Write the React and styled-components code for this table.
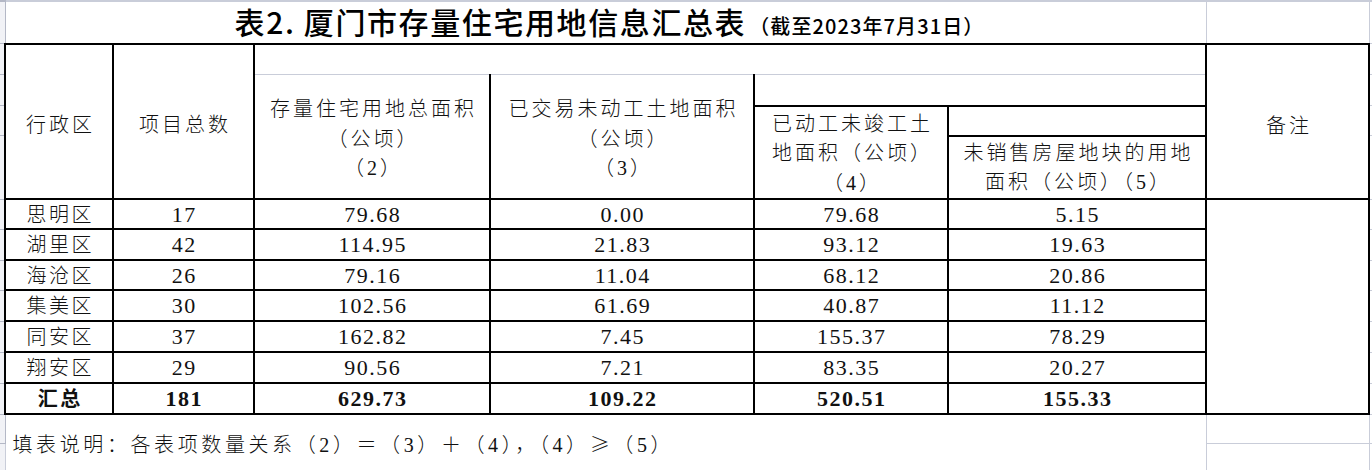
import React from "react";
import styled, { createGlobalStyle } from "styled-components";

const GRID = "#c9cdd9";
const LINE = "2px solid #000";
const THIN = `1px solid ${GRID}`;

const GlobalStyle = createGlobalStyle`
  html, body {
    margin: 0;
    padding: 0;
    background: #fff;
    overflow: hidden;
  }
  body {
    font-family: "Liberation Serif", "Noto Sans CJK SC", serif;
    color: #111;
  }
`;

const Sheet = styled.table`
  border-collapse: collapse;
  table-layout: fixed;
  width: 1372px;
`;

const Row = styled.tr`
  height: ${(p) => p.$h}px;
`;

// narrow row-header strip at the left edge of the sheet
const Strip = styled.th`
  padding: 0;
  background: #f1f2f6;
  border-right: 1px solid #b4b8c6;
  border-bottom: 1px solid #b4b8c6;
  border-top: 1px solid #b4b8c6;
`;

const side = (on) => (on ? LINE : THIN);

const Cell = styled.td`
  padding: 0;
  text-align: center;
  vertical-align: ${(p) => p.$va || "top"};
  border-top: ${(p) => side(p.$box || p.$t)};
  border-right: ${(p) => side(p.$box || p.$r)};
  border-bottom: ${(p) => side(p.$box || p.$b)};
  border-left: ${(p) => side(p.$box || p.$l)};
`;

const TitleLine = styled.div`
  height: 38px;
  line-height: 38px;
  padding-left: 8px;
  white-space: nowrap;
`;

const TitleMain = styled.span`
  font-family: "Noto Sans CJK SC", sans-serif;
  font-weight: 500;
  font-size: 30px;
  letter-spacing: 1.6px;
  margin-right: 3px;
  color: #000;
`;

const TitleSub = styled.span`
  font-family: "Noto Sans CJK SC", sans-serif;
  font-weight: 500;
  font-size: 20px;
  letter-spacing: 1.1px;
  color: #000;
`;

const Head = styled.div`
  font-family: "Liberation Serif", "Noto Sans CJK SC", serif;
  font-weight: 300;
  font-size: 20px;
  letter-spacing: 3px;
  padding-left: 3px;
  white-space: nowrap;
  padding-top: ${(p) => p.$mt || 0}px;
`;

const HeadLine = styled.div`
  height: 29.5px;
  line-height: 29.5px;
`;

const Text = styled.div`
  font-family: "Liberation Serif", "Noto Sans CJK SC", serif;
  font-weight: ${(p) => (p.$bold ? 700 : 300)};
  font-size: ${(p) => (p.$num ? 22 : 20)}px;
  letter-spacing: ${(p) => (p.$num ? 1.5 : 2.5)}px;
  padding-left: ${(p) => (p.$num ? 1.5 : 2.5)}px;
  height: 24px;
  line-height: 24px;
  margin-top: 3px;
  white-space: nowrap;
`;

const Note = styled.div`
  font-family: "Liberation Serif", "Noto Sans CJK SC", serif;
  font-weight: 300;
  font-size: 20px;
  letter-spacing: 3.6px;
  text-align: left;
  padding-left: 7px;
  margin-top: 15px;
  height: 28px;
  line-height: 28px;
  white-space: nowrap;
`;

const Wide = styled.span`
  font-family: "Noto Sans CJK SC", sans-serif;
`;

const widths = [5, 108, 141, 236, 264, 194, 258, 163, 3];

const rows = [
  ["思明区", "17", "79.68", "0.00", "79.68", "5.15"],
  ["湖里区", "42", "114.95", "21.83", "93.12", "19.63"],
  ["海沧区", "26", "79.16", "11.04", "68.12", "20.86"],
  ["集美区", "30", "102.56", "61.69", "40.87", "11.12"],
  ["同安区", "37", "162.82", "7.45", "155.37", "78.29"],
  ["翔安区", "29", "90.56", "7.21", "83.35", "20.27"],
];
const total = ["汇总", "181", "629.73", "109.22", "520.51", "155.33"];
const rowHeights = [30, 31, 30, 31, 31, 31];

const HeadText = ({ lines, mt }) => (
  <Head $mt={mt}>
    {lines.map((l) => (
      <HeadLine key={l}>{l}</HeadLine>
    ))}
  </Head>
);

const DataRow = ({ cells, h, bold, first }) => (
  <Row $h={h}>
    <Strip />
    {cells.map((c, i) => (
      <Cell key={i} $box>
        <Text $num={i > 0} $bold={bold}>
          {c}
        </Text>
      </Cell>
    ))}
    {first && <Cell $box rowSpan={7} />}
    <Cell />
  </Row>
);

export default function App() {
  return (
    <>
      <GlobalStyle />
      <Sheet>
        <colgroup>
          {widths.map((w, i) => (
            <col key={i} style={{ width: w }} />
          ))}
        </colgroup>
        <tbody>
          <Row $h={1}>
            <Strip />
            <Cell />
            <Cell colSpan={2} />
            <Cell />
            <Cell colSpan={2} />
            <Cell />
            <Cell />
          </Row>
          <Row $h={42}>
            <Strip />
            <Cell colSpan={6} $b>
              <TitleLine>
                <TitleMain>表2. 厦门市存量住宅用地信息汇总表</TitleMain>
                <TitleSub>（截至2023年7月31日）</TitleSub>
              </TitleLine>
            </Cell>
            <Cell $b />
            <Cell />
          </Row>
          <Row $h={31}>
            <Strip />
            <Cell $box rowSpan={4} $va="middle">
              <HeadText mt={8} lines={["行政区"]} />
            </Cell>
            <Cell $box rowSpan={4} $va="middle">
              <HeadText mt={8} lines={["项目总数"]} />
            </Cell>
            <Cell colSpan={4} $t $l $r />
            <Cell $box rowSpan={4} $va="middle">
              <HeadText mt={10} lines={["备注"]} />
            </Cell>
            <Cell />
          </Row>
          <Row $h={31}>
            <Strip />
            <Cell rowSpan={3} $l $r $b>
              <HeadText mt={20} lines={["存量住宅用地总面积", "（公顷）", "（2）"]} />
            </Cell>
            <Cell rowSpan={3} $l $r $b>
              <HeadText mt={20} lines={["已交易未动工土地面积", "（公顷）", "（3）"]} />
            </Cell>
            <Cell colSpan={2} $l $r $b />
            <Cell />
          </Row>
          <Row $h={30}>
            <Strip />
            <Cell rowSpan={2} $box>
              <HeadText mt={3} lines={["已动工未竣工土", "地面积（公顷）", "（4）"]} />
            </Cell>
            <Cell $box />
            <Cell />
          </Row>
          <Row $h={62}>
            <Strip />
            <Cell $box>
              <HeadText mt={2} lines={["未销售房屋地块的用地", "面积（公顷）（5）"]} />
            </Cell>
            <Cell />
          </Row>
          {rows.map((r, i) => (
            <DataRow key={r[0]} cells={r} h={rowHeights[i]} first={i === 0} />
          ))}
          <DataRow cells={total} h={31} bold />
          <Row $h={29}>
            <Strip />
            <Cell colSpan={6} rowSpan={2} $t>
              <Note>
                填表说明：各表项数量关系（2）＝（3）＋（4），（4）<Wide>≥</Wide>（5）
              </Note>
            </Cell>
            <Cell $t />
            <Cell />
          </Row>
          <Row $h={27}>
            <Strip />
            <Cell />
            <Cell />
          </Row>
          <Row $h={4}>
            <Strip />
            <Cell colSpan={6} />
            <Cell />
            <Cell />
          </Row>
        </tbody>
      </Sheet>
    </>
  );
}
